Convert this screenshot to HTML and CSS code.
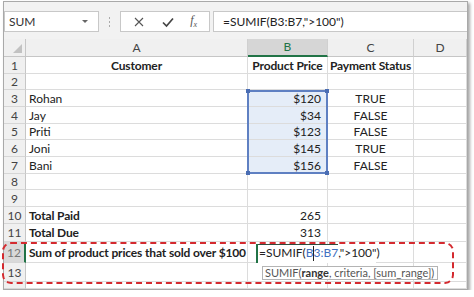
FILE: index.html
```html
<!DOCTYPE html>
<html>
<head>
<meta charset="utf-8">
<link rel="stylesheet" href="styles.css">
</head>
<body>
<div class="window">
  <div class="toolbar">
    <div class="namebox"><span>SUM</span><span class="caret"></span></div>
    <div class="grip"><i></i><i></i><i></i></div>
    <div class="fxbox">
      <svg class="ico" width="12" height="12" viewBox="0 0 12 12"><path d="M2 2 L10 10 M10 2 L2 10" stroke="#555" stroke-width="1.1" fill="none"/></svg>
      <svg class="ico" width="14" height="12" viewBox="0 0 14 12"><path d="M2 6.5 L5.5 10 L12 2.5" stroke="#444" stroke-width="1.7" fill="none"/></svg>
      <span class="fx">f<sub>x</sub></span>
    </div>
    <div class="formula">=SUMIF(B3:B7,"&gt;100")</div>
  </div>
  <div class="sheet">
    <div class="grid">
      <div class="corner"><span class="tri"></span></div>
      <div class="ch">A</div>
      <div class="ch chsel">B</div>
      <div class="ch">C</div>
      <div class="ch">D</div>

      <div class="rh">1</div><div class="c b ctr">Customer</div><div class="c b ctr">Product Price</div><div class="c b ctr">Payment Status</div><div class="c"></div>
      <div class="rh">2</div><div class="c"></div><div class="c"></div><div class="c"></div><div class="c"></div>
      <div class="rh">3</div><div class="c">Rohan</div><div class="c sel r">$120</div><div class="c ctr">TRUE</div><div class="c"></div>
      <div class="rh">4</div><div class="c">Jay</div><div class="c sel r">$34</div><div class="c ctr">FALSE</div><div class="c"></div>
      <div class="rh">5</div><div class="c">Priti</div><div class="c sel r">$123</div><div class="c ctr">FALSE</div><div class="c"></div>
      <div class="rh">6</div><div class="c">Joni</div><div class="c sel r">$145</div><div class="c ctr">TRUE</div><div class="c"></div>
      <div class="rh">7</div><div class="c">Bani</div><div class="c sel r">$156</div><div class="c ctr">FALSE</div><div class="c"></div>
      <div class="rh">8</div><div class="c"></div><div class="c"></div><div class="c"></div><div class="c"></div>
      <div class="rh">9</div><div class="c"></div><div class="c"></div><div class="c"></div><div class="c"></div>
      <div class="rh">10</div><div class="c b">Total Paid</div><div class="c r">265</div><div class="c"></div><div class="c"></div>
      <div class="rh">11</div><div class="c b">Total Due</div><div class="c r">313</div><div class="c"></div><div class="c"></div>
      <div class="rh rhact">12</div><div class="c b nowrap">Sum of product prices that sold over $100</div><div class="c"></div><div class="c"></div><div class="c"></div>
      <div class="rh">13</div><div class="c"></div><div class="c"></div><div class="c"></div><div class="c"></div>
      <div class="rh"></div><div class="c"></div><div class="c"></div><div class="c"></div><div class="c"></div>
    </div>
    <div class="selframe"><i class="h tl"></i><i class="h tr"></i><i class="h bl"></i><i class="h br"></i></div>
    <div class="editor">=SUMIF(<span class="ref">B</span><span class="cur"></span><span class="ref">3:B7</span>,"&gt;100")</div>
    <div class="tip">SUMIF(<b>range</b>, criteria, [sum_range])</div>
    <div class="dashed"></div>
  </div>
</div>
</body>
</html>
```
FILE: styles.css
```css
html, body {
  margin: 0;
  padding: 0;
  background: #ffffff;
}
body {
  font-family: Lato, "Open Sans", sans-serif;
  font-size: 12px;
  color: #222;
}
.window {
  margin: 1px 0 0 3px;
  width: 463px;
  height: 287px;
  border: 1px solid #a9a9a9;
  box-shadow: 2px 2px 3px rgba(0, 0, 0, 0.35);
  background: #f2f2f2;
  display: flex;
  flex-direction: column;
}
.toolbar {
  height: 37px;
  box-sizing: border-box;
  padding: 9px 0 0 0;
  display: flex;
  align-items: flex-start;
  background: #f2f2f2;
}
.namebox {
  width: 95px;
  height: 21px;
  box-sizing: border-box;
  background: #fff;
  border: 1px solid #c8c8c8;
  display: flex;
  align-items: center;
  justify-content: space-between;
  padding: 0 10px 0 4px;
  font-size: 12px;
  color: #333;
}
.caret {
  width: 0;
  height: 0;
  border-left: 3px solid transparent;
  border-right: 3px solid transparent;
  border-top: 3px solid #666;
}
.grip {
  width: 21px;
  height: 21px;
  display: flex;
  flex-direction: column;
  align-items: center;
  justify-content: center;
  gap: 2px;
}
.grip i {
  width: 1px;
  height: 2px;
  background: #aaa;
}
.fxbox {
  width: 90px;
  height: 21px;
  box-sizing: border-box;
  background: #fff;
  border: 1px solid #c8c8c8;
  display: flex;
  align-items: center;
  justify-content: space-around;
  padding: 0 4px;
}
.fx {
  font-family: "Liberation Serif", serif;
  font-style: italic;
  font-size: 12px;
  color: #555;
}
.fx sub {
  font-size: 8px;
}
.formula {
  margin-left: 3px;
  flex: 1;
  height: 21px;
  box-sizing: border-box;
  background: #fff;
  border: 1px solid #c8c8c8;
  border-right: none;
  padding: 0 0 0 9px;
  line-height: 19px;
  font-size: 12px;
  color: #222;
}
.sheet {
  position: relative;
  flex: 1;
  background: #fff;
}
.grid {
  display: grid;
  grid-template-columns: 22px 222px 80px 86px 53px;
  grid-template-rows: 18px 17px 16px 17px 17px 16px 17px 17px 16px 17px 17px 18px 21px 19px 7px;
  overflow: hidden;
  height: 250px;
}
.corner {
  background: #f0f0f0;
  border-right: 1px solid #c6c6c6;
  border-bottom: 1px solid #c6c6c6;
  position: relative;
}
.tri {
  position: absolute;
  right: 3px;
  bottom: 3px;
  width: 0;
  height: 0;
  border-left: 9px solid transparent;
  border-bottom: 9px solid #c2c2c2;
}
.ch {
  background: #f0f0f0;
  border-right: 1px solid #d0d0d0;
  border-bottom: 1px solid #c6c6c6;
  text-align: center;
  line-height: 17px;
  color: #444;
  font-size: 12px;
}
.chsel {
  background: #d6d6d6;
  border-bottom: 2px solid #217346;
  color: #217346;
  line-height: 16px;
}
.rh {
  background: #f0f0f0;
  border-right: 1px solid #c6c6c6;
  border-bottom: 1px solid #d6d6d6;
  text-align: center;
  color: #444;
  font-size: 12px;
  display: flex;
  align-items: center;
  justify-content: center;
  overflow: hidden;
}
.rhact {
  background: #d9d9d9;
  border-right: 2px solid #217346;
  color: #777;
}
.c {
  border-right: 1px solid #dcdcdc;
  border-bottom: 1px solid #dcdcdc;
  padding: 0 3px;
  display: flex;
  align-items: center;
  white-space: nowrap;
  overflow: visible;
  min-width: 0;
  color: #222;
}
.b {
  font-weight: 700;
  letter-spacing: -0.15px;
}
.ctr {
  justify-content: center;
}
.r {
  justify-content: flex-end;
  padding-right: 6px;
}
.sel {
  background: #e5edf8;
}
.nowrap {
  position: relative;
  z-index: 1;
}
.selframe {
  position: absolute;
  left: 243px;
  top: 51px;
  width: 81px;
  height: 84px;
  box-sizing: border-box;
  border: 2px solid #5f80c2;
}
.h {
  position: absolute;
  width: 4px;
  height: 4px;
  background: #4a6db3;
}
.tl { left: -3px; top: -3px; }
.tr { right: -3px; top: -3px; }
.bl { left: -3px; bottom: -3px; }
.br { right: -3px; bottom: -3px; }
.editor {
  position: absolute;
  left: 252px;
  top: 205px;
  width: 120px;
  height: 19px;
  box-sizing: border-box;
  padding-left: 3px;
  line-height: 18px;
  font-size: 12px;
  color: #222;
  background: #fff;
  white-space: nowrap;
  z-index: 2;
}
.editor::before {
  content: "";
  position: absolute;
  left: 0;
  top: 0;
  width: 82px;
  height: 1px;
  background: #2f4f3f;
}
.editor::after {
  content: "";
  position: absolute;
  left: 0;
  top: 0;
  width: 2px;
  height: 19px;
  background: #217346;
}
.ref {
  color: #3f6fc0;
}
.cur {
  display: inline-block;
  width: 1px;
  height: 15px;
  background: #222;
  vertical-align: middle;
  margin: 0 0 0 -1px;
}
.tip {
  position: absolute;
  left: 258px;
  top: 227px;
  height: 14px;
  box-sizing: border-box;
  padding: 0 3px 0 2px;
  line-height: 12px;
  background: #fff;
  border: 1px solid #b4b4b4;
  font-size: 11px;
  color: #555;
  white-space: nowrap;
  z-index: 2;
}
.tip b {
  color: #333;
}
.dashed {
  position: absolute;
  left: -2px;
  top: 203px;
  width: 452px;
  height: 42px;
  box-sizing: border-box;
  border: 2px dashed #d42a2f;
  border-radius: 9px;
  z-index: 3;
}
```
